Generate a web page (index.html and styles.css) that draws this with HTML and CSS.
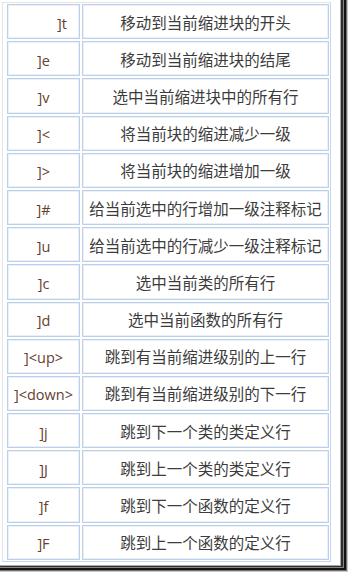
FILE: index.html
```html
<!DOCTYPE html>
<html lang="zh-CN">
<head>
<meta charset="utf-8">
<title>缩进块快捷键</title>
<link rel="stylesheet" href="styles.css">
</head>
<body>
<div class="shot">
  <div class="frame">
    <div class="grid">
      <div class="key key-right">]t</div><div class="desc">移动到当前缩进块的开头</div>
      <div class="key">]e</div><div class="desc">移动到当前缩进块的结尾</div>
      <div class="key">]v</div><div class="desc">选中当前缩进块中的所有行</div>
      <div class="key">]&lt;</div><div class="desc">将当前块的缩进减少一级</div>
      <div class="key">]&gt;</div><div class="desc">将当前块的缩进增加一级</div>
      <div class="key">]#</div><div class="desc">给当前选中的行增加一级注释标记</div>
      <div class="key">]u</div><div class="desc">给当前选中的行减少一级注释标记</div>
      <div class="key">]c</div><div class="desc">选中当前类的所有行</div>
      <div class="key">]d</div><div class="desc">选中当前函数的所有行</div>
      <div class="key">]&lt;up&gt;</div><div class="desc">跳到有当前缩进级别的上一行</div>
      <div class="key">]&lt;down&gt;</div><div class="desc">跳到有当前缩进级别的下一行</div>
      <div class="key">]j</div><div class="desc">跳到下一个类的类定义行</div>
      <div class="key">]J</div><div class="desc">跳到上一个类的类定义行</div>
      <div class="key">]f</div><div class="desc">跳到下一个函数的定义行</div>
      <div class="key">]F</div><div class="desc">跳到上一个函数的定义行</div>
    </div>
  </div>
</div>
</body>
</html>
```
FILE: styles.css
```css
html, body {
  margin: 0;
  padding: 0;
  background: #ffffff;
}

body {
  width: 350px;
  height: 573px;
  overflow: hidden;
}

.shot {
  box-sizing: border-box;
  width: 348px;
  height: 572px;
  padding: 2px 8px 7px 2px;
  background: #ffffff;
  box-shadow:
    inset -1px -1px 0 0 #c8c8c8,
    inset -2px -2px 0 0 #707070,
    inset -4px -4px 0 0 #141414,
    inset -5px -5px 0 0 #858585,
    inset -7px -6px 0 0 #303030,
    inset -8px -7px 0 0 #a8a8a8;
}

.frame {
  width: 329px;
  box-sizing: border-box;
  border-top: 1px solid #e4e4e4;
  border-left: 1px solid #e4e4e4;
  border-right: 1px solid #c4d6ee;
  border-bottom: 1px solid #c4d6ee;
  padding: 1px 1px 1px 4px;
}

.grid {
  display: grid;
  grid-template-columns: 73px 247px;
  grid-auto-rows: 35.2px;
  column-gap: 2px;
  row-gap: 2px;
}

.key,
.desc {
  box-sizing: border-box;
  border: 1px solid #bcd0ea;
  box-shadow: inset 0 0 0 1px #eaf0f8;
  background: #ffffff;
  display: flex;
  align-items: center;
  justify-content: center;
  white-space: nowrap;
}

.key {
  font-family: "Open Sans", "Liberation Sans", sans-serif;
  font-size: 14.5px;
  color: #65402f;
  padding-top: 3px;
}

.key-right {
  justify-content: flex-end;
  padding-right: 12px;
}

.desc {
  font-family: "Noto Sans CJK SC", "Noto Sans", sans-serif;
  font-size: 15.5px;
  color: #3c3c3c;
}
```
